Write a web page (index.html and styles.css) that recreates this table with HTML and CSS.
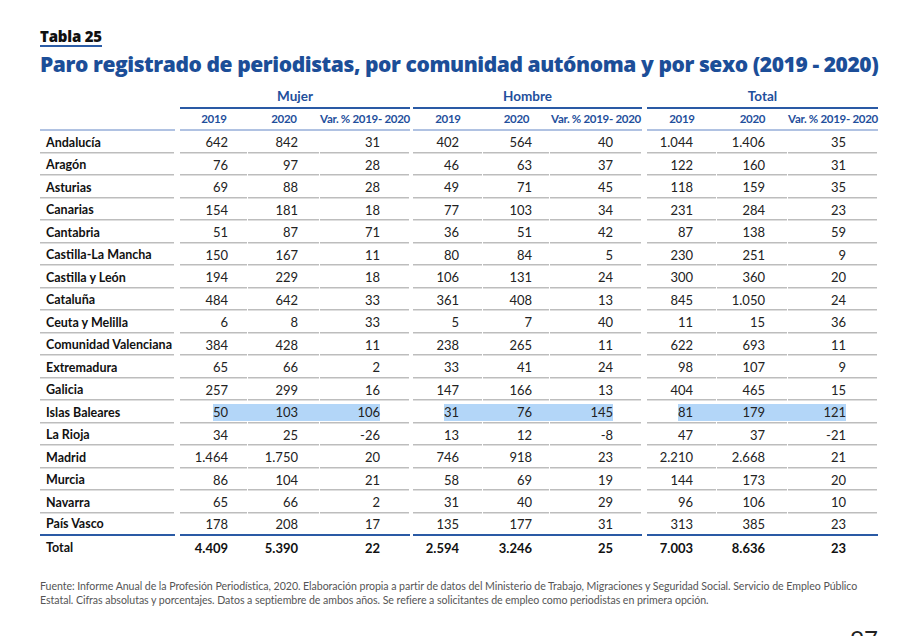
FILE: index.html
```html
<!DOCTYPE html>
<html lang="es">
<head>
<meta charset="utf-8">
<title>Tabla 25</title>
<link rel="stylesheet" href="styles.css">
</head>
<body>
<div class="page">
  <div class="caption">Tabla 25</div>
  <h1 class="title">Paro registrado de periodistas, por comunidad autónoma y por sexo (2019 - 2020)</h1>

  <div class="table">
    <div class="row ghead">
      <div class="lab"></div><div class="sp"></div>
      <div class="g">Mujer</div><div class="sp"></div>
      <div class="g">Hombre</div><div class="sp"></div>
      <div class="g">Total</div>
    </div>
    <div class="row shead">
      <div class="lab"></div><div class="sp"></div>
      <div class="h">2019</div><div class="h">2020</div><div class="h">Var. % 2019- 2020</div><div class="sp"></div>
      <div class="h">2019</div><div class="h">2020</div><div class="h">Var. % 2019- 2020</div><div class="sp"></div>
      <div class="h">2019</div><div class="h">2020</div><div class="h">Var. % 2019- 2020</div>
    </div>

    <div class="row"><div class="lab">Andalucía</div><div class="sp"></div><div class="n">642</div><div class="n">842</div><div class="n">31</div><div class="sp"></div><div class="n">402</div><div class="n">564</div><div class="n">40</div><div class="sp"></div><div class="n">1.044</div><div class="n">1.406</div><div class="n">35</div></div>
    <div class="row"><div class="lab">Aragón</div><div class="sp"></div><div class="n">76</div><div class="n">97</div><div class="n">28</div><div class="sp"></div><div class="n">46</div><div class="n">63</div><div class="n">37</div><div class="sp"></div><div class="n">122</div><div class="n">160</div><div class="n">31</div></div>
    <div class="row"><div class="lab">Asturias</div><div class="sp"></div><div class="n">69</div><div class="n">88</div><div class="n">28</div><div class="sp"></div><div class="n">49</div><div class="n">71</div><div class="n">45</div><div class="sp"></div><div class="n">118</div><div class="n">159</div><div class="n">35</div></div>
    <div class="row"><div class="lab">Canarias</div><div class="sp"></div><div class="n">154</div><div class="n">181</div><div class="n">18</div><div class="sp"></div><div class="n">77</div><div class="n">103</div><div class="n">34</div><div class="sp"></div><div class="n">231</div><div class="n">284</div><div class="n">23</div></div>
    <div class="row"><div class="lab">Cantabria</div><div class="sp"></div><div class="n">51</div><div class="n">87</div><div class="n">71</div><div class="sp"></div><div class="n">36</div><div class="n">51</div><div class="n">42</div><div class="sp"></div><div class="n">87</div><div class="n">138</div><div class="n">59</div></div>
    <div class="row"><div class="lab">Castilla-La Mancha</div><div class="sp"></div><div class="n">150</div><div class="n">167</div><div class="n">11</div><div class="sp"></div><div class="n">80</div><div class="n">84</div><div class="n">5</div><div class="sp"></div><div class="n">230</div><div class="n">251</div><div class="n">9</div></div>
    <div class="row"><div class="lab">Castilla y León</div><div class="sp"></div><div class="n">194</div><div class="n">229</div><div class="n">18</div><div class="sp"></div><div class="n">106</div><div class="n">131</div><div class="n">24</div><div class="sp"></div><div class="n">300</div><div class="n">360</div><div class="n">20</div></div>
    <div class="row"><div class="lab">Cataluña</div><div class="sp"></div><div class="n">484</div><div class="n">642</div><div class="n">33</div><div class="sp"></div><div class="n">361</div><div class="n">408</div><div class="n">13</div><div class="sp"></div><div class="n">845</div><div class="n">1.050</div><div class="n">24</div></div>
    <div class="row"><div class="lab">Ceuta y Melilla</div><div class="sp"></div><div class="n">6</div><div class="n">8</div><div class="n">33</div><div class="sp"></div><div class="n">5</div><div class="n">7</div><div class="n">40</div><div class="sp"></div><div class="n">11</div><div class="n">15</div><div class="n">36</div></div>
    <div class="row"><div class="lab">Comunidad Valenciana</div><div class="sp"></div><div class="n">384</div><div class="n">428</div><div class="n">11</div><div class="sp"></div><div class="n">238</div><div class="n">265</div><div class="n">11</div><div class="sp"></div><div class="n">622</div><div class="n">693</div><div class="n">11</div></div>
    <div class="row"><div class="lab">Extremadura</div><div class="sp"></div><div class="n">65</div><div class="n">66</div><div class="n">2</div><div class="sp"></div><div class="n">33</div><div class="n">41</div><div class="n">24</div><div class="sp"></div><div class="n">98</div><div class="n">107</div><div class="n">9</div></div>
    <div class="row"><div class="lab">Galicia</div><div class="sp"></div><div class="n">257</div><div class="n">299</div><div class="n">16</div><div class="sp"></div><div class="n">147</div><div class="n">166</div><div class="n">13</div><div class="sp"></div><div class="n">404</div><div class="n">465</div><div class="n">15</div></div>
    <div class="row"><div class="lab">Islas Baleares</div><div class="sp"></div><div class="n hl-start"><span>50</span></div><div class="n hl-mid"><span>103</span></div><div class="n hl-end"><span>106</span></div><div class="sp"></div><div class="n hl-start"><span>31</span></div><div class="n hl-mid"><span>76</span></div><div class="n hl-end"><span>145</span></div><div class="sp"></div><div class="n hl-start"><span>81</span></div><div class="n hl-mid"><span>179</span></div><div class="n hl-end"><span>121</span></div></div>
    <div class="row"><div class="lab">La Rioja</div><div class="sp"></div><div class="n">34</div><div class="n">25</div><div class="n">-26</div><div class="sp"></div><div class="n">13</div><div class="n">12</div><div class="n">-8</div><div class="sp"></div><div class="n">47</div><div class="n">37</div><div class="n">-21</div></div>
    <div class="row"><div class="lab">Madrid</div><div class="sp"></div><div class="n">1.464</div><div class="n">1.750</div><div class="n">20</div><div class="sp"></div><div class="n">746</div><div class="n">918</div><div class="n">23</div><div class="sp"></div><div class="n">2.210</div><div class="n">2.668</div><div class="n">21</div></div>
    <div class="row"><div class="lab">Murcia</div><div class="sp"></div><div class="n">86</div><div class="n">104</div><div class="n">21</div><div class="sp"></div><div class="n">58</div><div class="n">69</div><div class="n">19</div><div class="sp"></div><div class="n">144</div><div class="n">173</div><div class="n">20</div></div>
    <div class="row"><div class="lab">Navarra</div><div class="sp"></div><div class="n">65</div><div class="n">66</div><div class="n">2</div><div class="sp"></div><div class="n">31</div><div class="n">40</div><div class="n">29</div><div class="sp"></div><div class="n">96</div><div class="n">106</div><div class="n">10</div></div>
    <div class="row last"><div class="lab">País Vasco</div><div class="sp"></div><div class="n">178</div><div class="n">208</div><div class="n">17</div><div class="sp"></div><div class="n">135</div><div class="n">177</div><div class="n">31</div><div class="sp"></div><div class="n">313</div><div class="n">385</div><div class="n">23</div></div>
    <div class="row total"><div class="lab">Total</div><div class="sp"></div><div class="n">4.409</div><div class="n">5.390</div><div class="n">22</div><div class="sp"></div><div class="n">2.594</div><div class="n">3.246</div><div class="n">25</div><div class="sp"></div><div class="n">7.003</div><div class="n">8.636</div><div class="n">23</div></div>
  </div>

  <p class="note">Fuente: Informe Anual de la Profesión Periodística, 2020. Elaboración propia a partir de datos del Ministerio de Trabajo, Migraciones y Seguridad Social. Servicio de Empleo Público<br>Estatal. Cifras absolutas y porcentajes. Datos a septiembre de ambos años. Se refiere a solicitantes de empleo como periodistas en primera opción.</p>
  <div class="pagenum">97</div>
</div>
</body>
</html>
```

FILE: styles.css
```css
html, body {
  margin: 0;
  padding: 0;
  background: #ffffff;
}

.page {
  width: 838px;
  padding: 26px 0 0 40px;
  font-family: Lato, "Liberation Sans", sans-serif;
  color: #1a1a1a;
}

.caption {
  display: inline-block;
  font-family: "Open Sans", Lato, sans-serif;
  font-weight: 800;
  font-size: 15px;
  line-height: 18px;
  color: #111;
  border-bottom: 2px solid #2b5ca6;
  letter-spacing: -0.2px;
}

.title {
  margin: 2px 0 0;
  font-family: "Open Sans", Lato, sans-serif;
  font-weight: 800;
  font-size: 21px;
  line-height: 30px;
  color: #1c4e98;
  letter-spacing: -0.42px;
  white-space: nowrap;
}

.table {
  margin-top: 8px;
  display: flex;
  flex-direction: column;
}

.row {
  display: grid;
  grid-template-columns: 135px 5px 68px 72px 90px 3px 70px 67px 92px 5px 70px 71px 90px;
  height: 22.5px;
  box-sizing: border-box;
}

.row > div {
  display: flex;
  align-items: center;
  font-size: 13px;
  background-image: linear-gradient(#bdbdbd, #bdbdbd), linear-gradient(#dedede, #dedede);
  background-repeat: no-repeat;
  background-size: calc(100% - 1px) 1px, calc(100% - 1px) 1px;
  background-position: left bottom 1px, left bottom;
}

.row > .sp {
  background: none;
}

.lab {
  padding-left: 6px;
  font-weight: 700;
  font-size: 12.5px !important;
  color: #111;
}

.n {
  justify-content: flex-end;
  color: #222;
}

.row > .n:nth-child(3) { padding-right: 20px; }
.row > .n:nth-child(4) { padding-right: 22px; }
.row > .n:nth-child(5) { padding-right: 30px; }
.row > .n:nth-child(7) { padding-right: 24px; }
.row > .n:nth-child(8) { padding-right: 18px; }
.row > .n:nth-child(9) { padding-right: 29px; }
.row > .n:nth-child(11) { padding-right: 24px; }
.row > .n:nth-child(12) { padding-right: 23px; }
.row > .n:nth-child(13) { padding-right: 32px; }

/* header rows */
.ghead {
  height: 22px;
}
.ghead > div {
  background: none !important;
}
.ghead > .g {
  grid-column: span 3;
  justify-content: center;
  font-weight: 700;
  font-size: 13.5px !important;
  color: #1f4f9c;
  border-bottom: 2px solid #2a5aa5;
  padding-bottom: 3px;
}

.shead {
  height: 22px;
}
.shead > div {
  background: none !important;
  border-bottom: 2px solid #b0c2e2;
}
.shead > .sp {
  border-bottom: none;
}
.shead > .h {
  justify-content: center;
  font-weight: 700;
  font-size: 11.5px !important;
  color: #1f4f9c;
  letter-spacing: -0.3px;
  white-space: nowrap;
  padding-bottom: 1px;
}

/* last data row: dark rule */
.row.last > div {
  background: none;
  border-bottom: 2px solid #2a5aa5;
}
.row.last > .sp {
  border-bottom: none;
}

.row.total {
  height: 23px;
}
.row.total > div {
  background: none;
  font-weight: 700;
  color: #111;
}

/* highlighted selection */
.hl-start span,
.hl-mid span,
.hl-end span {
  line-height: 17px;
  background: #b3d6f8;
}
.row > .hl-start,
.row > .hl-mid {
  padding-right: 0 !important;
}
.hl-start span {
  display: block;
}
.row > .hl-start:nth-child(3) span { padding-right: 20px; }
.row > .hl-start:nth-child(7) span { padding-right: 24px; }
.row > .hl-start:nth-child(11) span { padding-right: 24px; }
.hl-mid span {
  flex: 1;
  text-align: right;
}
.row > .hl-mid:nth-child(4) span { padding-right: 22px; }
.row > .hl-mid:nth-child(8) span { padding-right: 18px; }
.row > .hl-mid:nth-child(12) span { padding-right: 23px; }
.hl-end span {
  flex: 1;
  text-align: right;
}

.note {
  margin: 20px 0 0;
  font-size: 10.6px;
  line-height: 14px;
  color: #555;
  white-space: nowrap;
  letter-spacing: -0.05px;
}

.pagenum {
  margin-top: 20px;
  text-align: right;
  font-size: 24px;
  line-height: 24px;
  color: #222;
}
```
